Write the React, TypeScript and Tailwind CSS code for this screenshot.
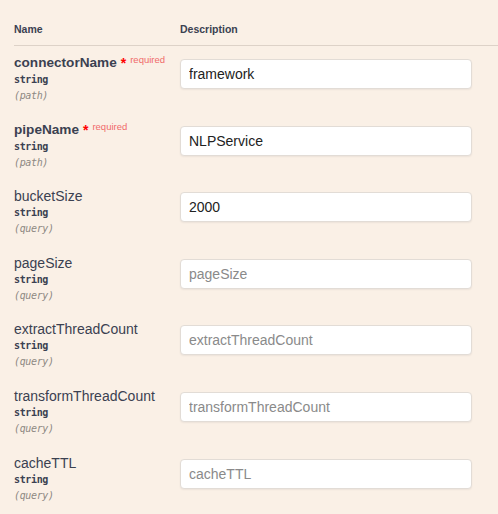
import React from 'react';

type Param = {
  name: string;
  required?: boolean;
  location: 'path' | 'query';
  value?: string;
};

const params: Param[] = [
  { name: 'connectorName', required: true, location: 'path', value: 'framework' },
  { name: 'pipeName', required: true, location: 'path', value: 'NLPService' },
  { name: 'bucketSize', location: 'query', value: '2000' },
  { name: 'pageSize', location: 'query' },
  { name: 'extractThreadCount', location: 'query' },
  { name: 'transformThreadCount', location: 'query' },
  { name: 'cacheTTL', location: 'query' },
];

const mono = "font-['DejaVu_Sans_Mono',monospace] text-[10px] tracking-[-0.35px]";

const ParamRow = ({ param }: { param: Param }) => (
  <div className="flex pt-2 pb-[8.6px]">
    <div className="w-[166px] shrink-0">
      <div className="flex items-start h-[18px] leading-[18px] text-[14px] whitespace-nowrap">
        {param.required ? (
          <>
            <span className="font-bold text-[13.6px] text-[#3b4151]">{param.name}</span>
            <span className="font-bold text-[#ff0000] ml-[4px]">*</span>
            <span className="text-[9.5px] leading-[10px] text-[#f06a6a] ml-[4px] mt-[1px]">
              required
            </span>
          </>
        ) : (
          <span className="text-[#3b4151]">{param.name}</span>
        )}
      </div>
      <div className={`${mono} h-4 leading-4 font-bold text-[#3b4151]`}>string</div>
      <div className={`${mono} h-4 leading-4 italic text-[#8d8882]`}>({param.location})</div>
    </div>
    <div className="pt-[5px]">
      <input
        type="text"
        readOnly
        value={param.value ?? ''}
        placeholder={param.name}
        className="w-[292px] h-[30px] px-2 bg-white border border-[#e2dcd6] rounded-[4px] shadow-[0_1px_2px_rgba(0,0,0,0.06)] text-[14px] text-[#222] placeholder:text-[#8a8a8a] outline-none"
      />
    </div>
  </div>
);

export default function App() {
  return (
    <div className="min-h-screen bg-[#faf0e6] font-['Liberation_Sans',Arial,sans-serif]">
      <div className="pl-[14px]">
        <div className="flex pt-[22px] pb-[9px] border-b border-[#ddd2c8] text-[10.5px] leading-[14px] font-bold text-[#3b4151]">
          <div className="w-[166px]">Name</div>
          <div>Description</div>
        </div>
        {params.map((p) => (
          <ParamRow key={p.name} param={p} />
        ))}
      </div>
    </div>
  );
}
